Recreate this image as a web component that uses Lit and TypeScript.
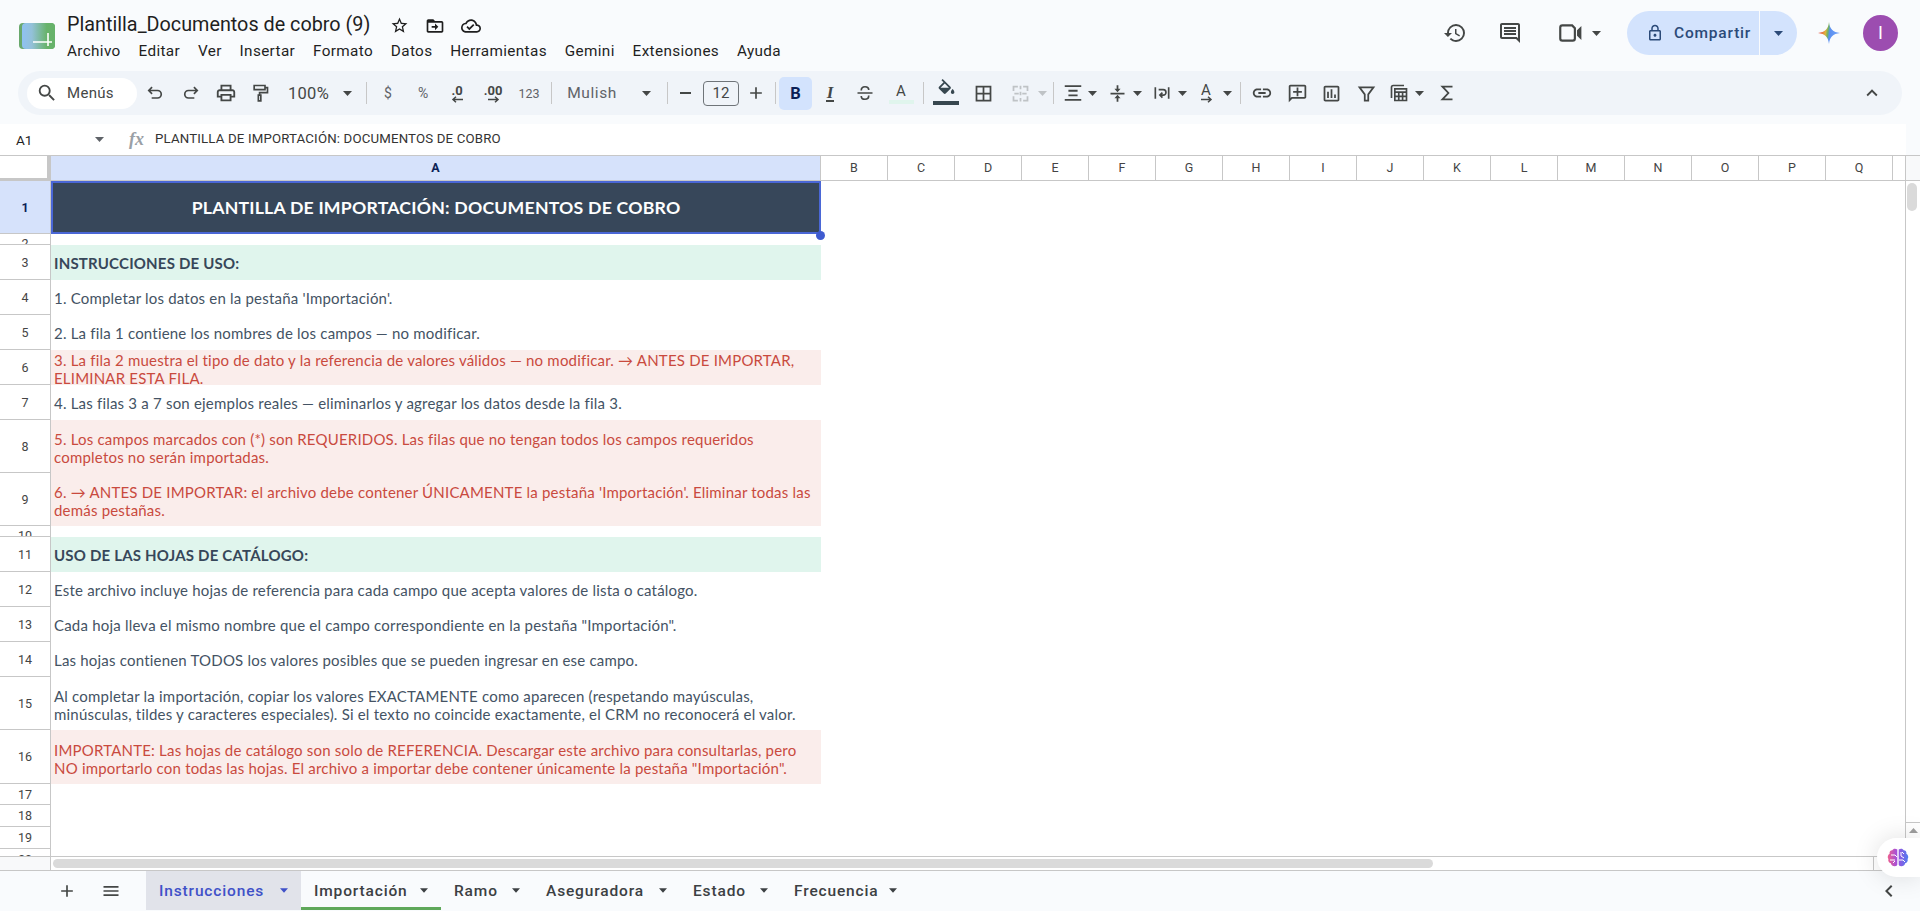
import { LitElement, html, css, svg, nothing } from "lit";
import { customElement } from "lit/decorators.js";

const P: Record<string, string> = {
  search: "M15.5 14h-.79l-.28-.27A6.471 6.471 0 0 0 16 9.5 6.5 6.5 0 1 0 9.5 16c1.61 0 3.09-.59 4.23-1.57l.27.28v.79l5 4.99L20.49 19l-4.99-5zm-6 0C7.01 14 5 11.99 5 9.5S7.01 5 9.5 5 14 7.01 14 9.5 11.99 14 9.5 14z",
  print: "M19 8h-1V3H6v5H5c-1.66 0-3 1.34-3 3v6h4v4h12v-4h4v-6c0-1.66-1.34-3-3-3zM8 5h8v3H8V5zm8 14H8v-4h8v4zm2-4v-2H6v2H4v-4c0-.55.45-1 1-1h14c.55 0 1 .45 1 1v4h-2z",
  star: "M22 9.24l-7.19-.62L12 2 9.19 8.63 2 9.24l5.46 4.73L5.82 21 12 17.27 18.18 21l-1.63-7.03L22 9.24zM12 15.4l-3.76 2.27 1-4.28-3.32-2.88 4.38-.38L12 6.1l1.71 4.04 4.38.38-3.32 2.88 1 4.28L12 15.4z",
  move: "M20 6h-8l-2-2H4c-1.1 0-2 .9-2 2v12c0 1.1.9 2 2 2h16c1.1 0 2-.9 2-2V8c0-1.1-.9-2-2-2zm0 12H4V8h16v10zm-8-4H8v-2h4V9l4 4-4 4v-3z",
  cloud: "M19.35 10.04C18.67 6.59 15.64 4 12 4 9.11 4 6.6 5.64 5.35 8.04 2.34 8.36 0 10.91 0 14c0 3.31 2.69 6 6 6h13c2.76 0 5-2.24 5-5 0-2.64-2.05-4.78-4.65-4.96zM19 18H6c-2.21 0-4-1.79-4-4 0-2.05 1.53-3.76 3.56-3.97l1.07-.11.5-.95C8.08 7.14 9.94 6 12 6c2.62 0 4.88 1.86 5.39 4.43l.3 1.5 1.53.11c1.56.1 2.78 1.41 2.78 2.96 0 1.65-1.35 3-3 3zm-9-3.82l-2.09-2.09L6.5 13.5 10 17l6.01-6.01-1.41-1.41z",
  history: "M13 3a9 9 0 0 0-9 9H1l3.89 3.89.07.14L9 12H6c0-3.87 3.13-7 7-7s7 3.13 7 7-3.13 7-7 7c-1.93 0-3.68-.79-4.94-2.06l-1.42 1.42A8.954 8.954 0 0 0 13 21a9 9 0 0 0 0-18zm-1 5v5l4.28 2.54.72-1.21-3.5-2.08V8H12z",
  comments: "M20 2H4c-1.1 0-2 .9-2 2v12c0 1.1.9 2 2 2h14l4 4V4c0-1.1-.9-2-2-2zm0 15.17L18.83 16H4V4h16v13.17zM6 12h12v2H6zm0-3h12v2H6zm0-3h12v2H6z",
  lock: "M18 8h-1V6c0-2.76-2.24-5-5-5S7 3.24 7 6v2H6c-1.1 0-2 .9-2 2v10c0 1.1.9 2 2 2h12c1.1 0 2-.9 2-2V10c0-1.1-.9-2-2-2zM9 6c0-1.66 1.34-3 3-3s3 1.34 3 3v2H9V6zm9 14H6V10h12v10zm-6-3c1.1 0 2-.9 2-2s-.9-2-2-2-2 .9-2 2 .9 2 2 2z",
  fill: "M16.56 8.94L7.62 0 6.21 1.41l2.38 2.38-5.15 5.15c-.59.59-.59 1.54 0 2.12l5.5 5.5c.29.29.68.44 1.06.44s.77-.15 1.06-.44l5.5-5.5c.59-.58.59-1.53 0-2.12zM5.21 10L10 5.21 14.79 10H5.21zM19 11.5s-2 2.17-2 3.5c0 1.1.9 2 2 2s2-.9 2-2c0-1.33-2-3.5-2-3.5z",
  borders: "M3 3v18h18V3H3zm8 16H5v-6h6v6zm0-8H5V5h6v6zm8 8h-6v-6h6v6zm0-8h-6V5h6v6z",
  link: "M3.9 12c0-1.71 1.39-3.1 3.1-3.1h4V7H7c-2.76 0-5 2.24-5 5s2.24 5 5 5h4v-1.9H7c-1.71 0-3.1-1.39-3.1-3.1zM8 13h8v-2H8v2zm9-6h-4v1.9h4c1.71 0 3.1 1.39 3.1 3.1s-1.39 3.1-3.1 3.1h-4V17h4c2.76 0 5-2.24 5-5s-2.24-5-5-5z",
  addc: "M20 2H4c-1.1 0-2 .9-2 2v18l4-4h14c1.1 0 2-.9 2-2V4c0-1.1-.9-2-2-2zm0 14H5.17L4 17.17V4h16v12zM13 5h-2v4H7v2h4v4h2v-4h4V9h-4V5z",
  chart: "M19 3H5c-1.1 0-2 .9-2 2v14c0 1.1.9 2 2 2h14c1.1 0 2-.9 2-2V5c0-1.1-.9-2-2-2zm0 16H5V5h14v14zM7 10h2v7H7zm4-3h2v10h-2zm4 6h2v4h-2z",
  up: "M7.41 15.41L12 10.83l4.59 4.58L18 14l-6-6-6 6z",
  left: "M15.41 7.41L14 6l-6 6 6 6 1.41-1.41L10.83 12z",
  menu: "M3 18h18v-2H3v2zm0-5h18v-2H3v2zm0-7v2h18V6H3z",
  plus: "M19 13h-6v6h-2v-6H5v-2h6V5h2v6h6v2z",
};
const S: Record<string, string> = {
  undo: "M8.5 5 4.5 9l4 4M4.5 9H15a4.5 4.5 0 0 1 0 9H8",
  redo: "M15.5 5l4 4-4 4M19.500 9H9a4.5 4.5 0 0 0 0 9h7",
  paint: "M5 3h13v5H5zM18 5.5h3v6h-9.5v3M10 14.5h3v7h-3z",
  strike: "M3 12h18M7.5 9C7.5 6 9.5 4.5 12 4.5S16.5 6 16.5 8.5M7.5 15.5C7.5 18 9.5 19.5 12 19.5s4.5-1.5 4.5-4.5",
  merge: "M4 9V4h5M15 4h5v5M4 15v5h5M15 20h5v-5M12 3v4M12 10v4M12 17v4M5 12h5M14 12h5",
  halign: "M3 4.5h18M7 9.5h10M7 14.5h10M3 19.5h18",
  valign: "M4 12h16M12 2.5V7M12 21.5V17",
  wrap: "M4 5v14M20 5v14M8 8h5.5a3 3 0 0 1 0 6.5H10M12.5 11.5 9.5 14.5l3 3",
  filter: "M4 5h16l-6 8v7h-4v-7z",
  calc: "M3 18V5a2 2 0 0 1 2-2h13M7 7h14v14H7zM7 11h14M7 16h14M11.7 11v10M16.3 11v10",
  sigma: "M18 5H7l6.500 7L7 19h11",
  video: "M3 7a2 2 0 0 1 2-2h9l2.500 2.500V17a2 2 0 0 1-2 2H5a2 2 0 0 1-2-2z",
};
const EXTRA: Record<string, string> = {
  valign: "M8.5 6.5h7L12 10.5zM8.5 17.5h7L12 13.5z",
  video: "M18.500 9.500l4-4v13l-4-4z",
};
const icon = (n: string, size = 24) =>
  html`<svg class="ic" width=${size} height=${size} viewBox="0 0 24 24">${
    S[n]
      ? svg`<path d=${S[n]} fill="none" stroke="currentColor" stroke-width="2"/>`
      : svg`<path d=${P[n]} fill="currentColor"/>`
  }${EXTRA[n] ? svg`<path d=${EXTRA[n]} fill="currentColor"/>` : nothing}</svg>`;
const caret = html`<svg class="caret" width="9" height="5" viewBox="0 0 9 5"><path d="M0 0h9L4.500 5z" fill="currentColor"/></svg>`;
const arrowR = html`<svg class="mini" width="13" height="7" viewBox="0 0 13 7"><path d="M1 3.500h10M8 .8 11 3.500 8 6.200" fill="none" stroke="currentColor" stroke-width="1.500"/></svg>`;
const arrowL = html`<svg class="mini" width="13" height="7" viewBox="0 0 13 7"><path d="M12 3.500H2M5 .8 2 3.500 5 6.200" fill="none" stroke="currentColor" stroke-width="1.500"/></svg>`;

type T = { c: number; t: any; cls?: string };
const tools: T[] = [
  { c: 155, t: icon("undo", 20) }, { c: 191, t: icon("redo", 20) }, { c: 226, t: icon("print", 22) }, { c: 260, t: icon("paint", 20) },
  { c: 308.5, t: "100%", cls: "zoomv" }, { c: 347, t: caret }, { c: 366.5, t: "", cls: "sep" },
  { c: 388, t: "$", cls: "fmt" }, { c: 423, t: "%", cls: "fmt" },
  { c: 457, t: html`<span class="dec"><b>.0</b>${arrowL}</span>` }, { c: 493, t: html`<span class="dec"><b>.00</b>${arrowR}</span>` },
  { c: 529, t: "123", cls: "n123" }, { c: 551, t: "", cls: "sep" },
  { c: 592, t: "Mulish", cls: "font" }, { c: 646, t: caret }, { c: 667, t: "", cls: "sep" },
  { c: 685, t: html`<span class="minus"></span>` }, { c: 721, t: html`<span class="size">12</span>` }, { c: 755.5, t: icon("plus", 20) }, { c: 775, t: "", cls: "sep" },
  { c: 795.5, t: html`<span class="bold">B</span>` }, { c: 830, t: html`<span class="ital">I</span>` }, { c: 865, t: icon("strike", 20) },
  { c: 901, t: html`<span class="colora">A</span>` }, { c: 923, t: "", cls: "sep" },
  { c: 946, t: html`<span class="fillw">${icon("fill", 21)}</span>` }, { c: 983, t: icon("borders", 21) },
  { c: 1020, t: icon("merge", 21), cls: "off" }, { c: 1042, t: caret, cls: "off" }, { c: 1053.5, t: "", cls: "sep" },
  { c: 1073, t: icon("halign", 22) }, { c: 1092, t: caret }, { c: 1117, t: icon("valign", 21) }, { c: 1137, t: caret },
  { c: 1162, t: icon("wrap", 20) }, { c: 1182, t: caret },
  { c: 1206, t: html`<span class="dec rot"><i>A</i>${arrowR}</span>` }, { c: 1227, t: caret }, { c: 1240, t: "", cls: "sep" },
  { c: 1262, t: icon("link", 22) }, { c: 1297, t: icon("addc", 21) }, { c: 1331, t: icon("chart", 21) },
  { c: 1366.5, t: icon("filter", 21) }, { c: 1399, t: icon("calc", 20) }, { c: 1419, t: caret }, { c: 1447, t: icon("sigma", 22) },
];

const menus = ["Archivo", "Editar", "Ver", "Insertar", "Formato", "Datos", "Herramientas", "Gemini", "Extensiones", "Ayuda"];
const cols = ["B", "C", "D", "E", "F", "G", "H", "I", "J", "K", "L", "M", "N", "O", "P", "Q"];
const tabs = [
  { t: "Instrucciones", w: 155, k: "active" }, { t: "Importación", w: 140, k: "green" }, { t: "Ramo", w: 92, k: "" },
  { t: "Aseguradora", w: 147, k: "" }, { t: "Estado", w: 101, k: "" }, { t: "Frecuencia", w: 129, k: "" },
];
type R = { n: number; h: number; k?: string; l?: string[] };
const rows: R[] = [
  { n: 1, h: 53, k: "hdr", l: ["PLANTILLA DE IMPORTACIÓN: DOCUMENTOS DE COBRO"] },
  { n: 2, h: 11 },
  { n: 3, h: 35, k: "sec", l: ["INSTRUCCIONES DE USO:"] },
  { n: 4, h: 35, l: ["1. Completar los datos en la pestaña 'Importación'."] },
  { n: 5, h: 35, l: ["2. La fila 1 contiene los nombres de los campos — no modificar."] },
  { n: 6, h: 35, k: "red", l: ["3. La fila 2 muestra el tipo de dato y la referencia de valores válidos — no modificar. → ANTES DE IMPORTAR,", "ELIMINAR ESTA FILA."] },
  { n: 7, h: 35, l: ["4. Las filas 3 a 7 son ejemplos reales — eliminarlos y agregar los datos desde la fila 3."] },
  { n: 8, h: 53, k: "red", l: ["5. Los campos marcados con (*) son REQUERIDOS. Las filas que no tengan todos los campos requeridos", "completos no serán importadas."] },
  { n: 9, h: 53, k: "red", l: ["6. → ANTES DE IMPORTAR: el archivo debe contener ÚNICAMENTE la pestaña 'Importación'. Eliminar todas las", "demás pestañas."] },
  { n: 10, h: 11 },
  { n: 11, h: 35, k: "sec", l: ["USO DE LAS HOJAS DE CATÁLOGO:"] },
  { n: 12, h: 35, l: ["Este archivo incluye hojas de referencia para cada campo que acepta valores de lista o catálogo."] },
  { n: 13, h: 35, l: ["Cada hoja lleva el mismo nombre que el campo correspondiente en la pestaña \"Importación\"."] },
  { n: 14, h: 35, l: ["Las hojas contienen TODOS los valores posibles que se pueden ingresar en ese campo."] },
  { n: 15, h: 53, l: ["Al completar la importación, copiar los valores EXACTAMENTE como aparecen (respetando mayúsculas,", "minúsculas, tildes y caracteres especiales). Si el texto no coincide exactamente, el CRM no reconocerá el valor."] },
  { n: 16, h: 54, k: "red", l: ["IMPORTANTE: Las hojas de catálogo son solo de REFERENCIA. Descargar este archivo para consultarlas, pero", "NO importarlo con todas las hojas. El archivo a importar debe contener únicamente la pestaña \"Importación\"."] },
  { n: 17, h: 21 }, { n: 18, h: 22 }, { n: 19, h: 22 }, { n: 20, h: 22 },
];

@customElement("app-root")
export class AppRoot extends LitElement {
  static styles = css`
    :host { display: block; position: relative; width: 1920px; height: 911px; overflow: hidden; background: #f9fbfd; font-family: Roboto, sans-serif; color: #1f1f1f; }
    .ic, .caret { display: block; flex: none; }
    .top { display: flex; height: 71px; color: #444746; }
    .logo { margin: 23px 0 0 19px; flex: none; }
    .titles { margin-left: 12px; }
    .title { display: flex; align-items: center; height: 24px; margin-top: 12px; font-size: 19.8px; color: #1f1f1f; white-space: nowrap; }
    .title .ic:first-of-type { margin-left: 20px; }
    .title .ic { margin: 3px 16px 0 0; }
    .menus { display: flex; gap: 17.9px; margin-top: 4px; font-size: 15.3px; line-height: 22px; color: #1f1f1f; letter-spacing: .35px; }
    .right { margin-left: auto; padding: 11px 22px 0 0; display: flex; align-items: flex-start; }
    .right > span { margin-top: 10px; }
    .hist { margin-right: 31px; }
    .cmt { margin-right: 35px; }
    .right > .vid { margin: 9px 9px 0 0; }
    .right > .caret { margin: 20px 26px 0 0; }
    .share { display: flex; height: 44px; width: 170px; border-radius: 22px; background: #d3e3fd; color: #2b4a78; overflow: hidden; }
    .share .a { width: 133px; display: flex; align-items: center; padding-left: 19px; gap: 10px; box-sizing: border-box; border-right: 1px solid #f9fbfd; font-size: 15.5px; letter-spacing: .8px; font-weight: 500; }
    .share .b { flex: 1; display: flex; align-items: center; justify-content: center; }
    .gem { margin: 10px 22px 0 20px; flex: none; }
    .avatar { width: 35px; height: 36px; margin-top: 4px; border-radius: 50%; background: #9c4db0; color: #fff; text-align: center; font-size: 18px; line-height: 36px; flex: none; }

    .toolbar { display: flex; align-items: center; height: 44px; margin: 0 18px; border-radius: 22px; background: #f0f4f9; color: #444746; padding-left: 9px; }
    .pill { display: flex; align-items: center; width: 110px; height: 31px; flex: none; border-radius: 16px; background: #fff; box-sizing: border-box; padding-left: 9px; gap: 9px; font-size: 15px; letter-spacing: .3px; color: #444746; }
    .t { display: flex; align-items: center; justify-content: center; flex: none; width: 2px; height: 44px; font-size: 15px; white-space: nowrap; }
    .t.sep::after { content: ""; flex: none; width: 1px; height: 22px; background: #c7c7c7; }
    .t.off { color: #bfc3c6; }
    .t.zoomv { font-size: 16.5px; letter-spacing: .3px; }
    .t.fmt { font-size: 14px; color: #5f6368; }
    .t.n123 { font-size: 12.5px; color: #5f6368; }
    .t.font { font-size: 15.5px; letter-spacing: .6px; color: #5f6368; }
    .dec { display: flex; flex: none; flex-direction: column; align-items: center; font-size: 13px; line-height: 13px; }
    .dec b { font-weight: 700; }
    .dec .mini { margin-top: -1px; }
    .rot i { font-style: normal; font-size: 15px; line-height: 14px; }
    .minus { flex: none; width: 11px; height: 2px; background: #444746; }
    .size { display: block; flex: none; width: 36px; height: 25px; box-sizing: border-box; border: 1px solid #6f7479; border-radius: 4px; text-align: center; line-height: 23px; font-size: 15px; }
    .bold { display: block; flex: none; width: 33px; height: 33px; line-height: 33px; text-align: center; border-radius: 5px; background: #d3e3fd; color: #0b1f56; font-weight: 700; font-size: 16.500px; }
    .ital { font-style: italic; font-weight: 700; font-size: 17px; font-family: "Liberation Serif", serif; border-bottom: 2px solid #444746; line-height: 15px; padding: 0 1px; }
    .colora { display: block; flex: none; width: 25px; text-align: center; font-size: 15px; line-height: 18px; border-bottom: 4px solid #e0f5ed; }
    .fillw { display: block; flex: none; width: 26px; border-bottom: 4px solid #37474f; color: #37474f; padding-bottom: 1px; }
    .fillw .ic { margin: -3px auto 0; }
    .collapse { margin-left: auto; margin-right: 19px; }

    .fbar { height: 31px; margin: 9px 14px 0 0; background: #fff; display: flex; align-items: center; font-size: 13px; }
    .fbar .ref { margin-left: 16px; width: 79px; font-size: 13.500px; }
    .fbar .caret { color: #5f6368; }
    .fbar .fx { margin-left: 25px; width: 26px; font: italic 700 18px "Liberation Serif", serif; color: #9aa0a6; }
    .fbar .val { font-size: 13.250px; letter-spacing: .16px; color: #333; white-space: nowrap; margin-top: -2px; }

    .sheet { height: 716px; background: #fff; display: flex; flex-direction: column; }
    .colhead { display: flex; height: 26px; box-sizing: border-box; border-top: 1px solid #c7c7c7; border-bottom: 1px solid #c7c7c7; flex: none; font-size: 12.500px; color: #444; background: #fff; }
    .corner { width: 51px; box-sizing: border-box; border-right: 4px solid #c7c7c7; border-bottom: 3px solid #c7c7c7; margin-bottom: -1px; flex: none; }
    .ch { width: 67px; flex: none; box-sizing: border-box; border-right: 1px solid #c7c7c7; text-align: center; line-height: 24px; }
    .ch.a { width: 770px; background: #d6e2fb; color: #0b1f56; font-weight: 700; }
    .ch.last { width: 13px; }
    .ch.sb { flex: 1; border: 0; background: #f8f9fa; }
    .body { flex: 1; min-height: 0; display: flex; overflow: hidden; }
    .grid { flex: 1; min-width: 0; overflow: hidden; }
    .row { display: flex; overflow: hidden; }
    .rh { width: 51px; flex: none; box-sizing: border-box; border-right: 1px solid #c7c7c7; border-bottom: 1px solid #c7c7c7; text-align: center; font-size: 12.500px; color: #444; overflow: hidden; }
    .rh.on { background: #d6e2fb; color: #0b1f56; font-weight: 700; }
    .cell { position: relative; width: 770px; flex: none; box-sizing: border-box; padding-left: 3px; display: flex; flex-direction: column; justify-content: center; font-family: Lato, sans-serif; font-size: 15px; line-height: 18px; letter-spacing: .2px; color: #445364; white-space: nowrap; overflow: hidden; }
    .cell.two { padding-top: 3px; }
    .cell.red { background: #faedeb; color: #c94a3e; }
    .cell.sec { background: #e0f5ed; font-weight: 700; color: #37475a; }
    .cell.hdr { background: #37475a; color: #fdfefe; font-weight: 700; font-size: 17.7px; text-align: center; padding-left: 0; box-shadow: inset 0 0 0 2px #4a67d6; }
    .vs { width: 14px; flex: none; border-left: 1px solid #c7c7c7; background: #fff; display: flex; flex-direction: column; }
    .vs .th { width: 10px; height: 28px; margin: 2px 0 0 1px; border-radius: 5px; background: #dadada; }
    .vs .up { margin-top: auto; height: 34px; border-top: 1px solid #c7c7c7; color: #9e9e9e; display: flex; justify-content: center; padding-top: 5px; box-sizing: border-box; }
    .up svg { transform: rotate(180deg); }
    .hs { height: 15px; flex: none; box-sizing: border-box; border-top: 1px solid #c7c7c7; border-bottom: 1px solid #c7c7c7; display: flex; }
    .hs .l { width: 51px; box-sizing: border-box; border-right: 1px solid #c7c7c7; background: #f8f9fa; }
    .hs .th { width: 1380px; height: 9px; margin: 2px 0 0 2px; border-radius: 5px; background: #dadada; }
    .hs .end { margin-left: auto; width: 46px; border-left: 1px solid #c7c7c7; }

    .tabs { height: 39px; display: flex; padding-left: 45px; color: #444746; }
    .tb { width: 44px; display: flex; align-items: center; justify-content: center; flex: none; }
    .tb + .tab { margin-left: 13px; }
    .tab { display: flex; align-items: center; box-sizing: border-box; flex: none; padding: 3px 13px 0; font-size: 15.5px; font-weight: 500; letter-spacing: .85px; color: #3c4043; border-bottom: 3px solid transparent; }
    .tab .caret { margin-left: auto; width: 8px; }
    .tab.active { background: #e1e3ea; color: #3f51c8; }
    .tab.green { border-bottom-color: #5fa85a; }
    .end-chev { margin-left: auto; margin-right: 19px; align-self: center; }
    .handle { position: absolute; left: 816px; top: 231px; width: 9px; height: 9px; border-radius: 50%; background: #3f5bd0; }
    .fab { position: absolute; right: 0; top: 838px; width: 43px; height: 39px; border-radius: 20px 0 0 20px; background: #fff; box-shadow: 0 0 26px rgba(0, 0, 0, .13); display: flex; align-items: center; padding-left: 10px; box-sizing: border-box; }
  `;

  private toolItems() {
    let prev = 137;
    return tools.map((it) => {
      const m = it.c - 1 - prev;
      prev = it.c + 1;
      return html`<div class="t ${it.cls ?? ""}" style="margin-left:${m}px">${it.t}</div>`;
    });
  }

  render() {
    return html`
      <div class="top">
        <svg class="logo" width="36" height="26" viewBox="0 0 36 26">
          <defs><linearGradient id="lg" x1="0" x2="1" y1="0" y2="0"><stop offset="0" stop-color="#8fc1f2"/><stop offset=".3" stop-color="#93c1d8"/><stop offset=".75" stop-color="#68b36b"/><stop offset="1" stop-color="#66b26a"/></linearGradient></defs>
          <rect width="36" height="26" rx="4" fill="#69a86c"/><rect x="3" width="33" height="26" rx="4" fill="url(#lg)"/>
          <path d="M14 19h19M29 10v13" stroke="#fff" stroke-width="1.600" fill="none"/>
        </svg>
        <div class="titles">
          <div class="title">Plantilla_Documentos de cobro (9)${icon("star", 19)}${icon("move", 20)}${icon("cloud", 20)}</div>
          <div class="menus">${menus.map((m) => html`<span>${m}</span>`)}</div>
        </div>
        <div class="right">
          <span class="hist">${icon("history", 24)}</span>
          <span class="cmt">${icon("comments", 24)}</span>
          <span class="vid">${icon("video", 26)}</span>
          ${caret}
          <div class="share"><div class="a">${icon("lock", 18)}<span>Compartir</span></div><div class="b">${caret}</div></div>
          <svg class="gem" width="24" height="24" viewBox="0 0 24 24"><defs><linearGradient id="gm" x1=".15" x2=".85" y1=".3" y2=".4"><stop offset="0" stop-color="#e8563f"/><stop offset=".3" stop-color="#dfb53e"/><stop offset=".45" stop-color="#6fb166"/><stop offset=".56" stop-color="#5b8ff0"/><stop offset="1" stop-color="#6a9df5"/></linearGradient></defs><path d="M12 1C12.600 7.500 16 11.400 23 12 16 12.600 12.600 16.500 12 23 11.400 16.500 8 12.600 1 12 8 11.400 11.400 7.500 12 1Z" fill="url(#gm)"/></svg>
          <div class="avatar">I</div>
        </div>
      </div>
      <div class="toolbar">
        <div class="pill">${icon("search", 22)}<span>Menús</span></div>
        ${this.toolItems()}
        <span class="collapse">${icon("up", 22)}</span>
      </div>
      <div class="fbar">
        <span class="ref">A1</span>${caret}
        <span class="fx">fx</span>
        <span class="val">PLANTILLA DE IMPORTACIÓN: DOCUMENTOS DE COBRO</span>
      </div>
      <div class="sheet">
        <div class="colhead">
          <div class="corner"></div>
          <div class="ch a">A</div>
          ${cols.map((c) => html`<div class="ch">${c}</div>`)}
          <div class="ch last"></div>
          <div class="ch sb"></div>
        </div>
        <div class="body">
          <div class="grid">
            ${rows.map((r) => html`
              <div class="row" style="height:${r.h}px">
                <div class="rh ${r.n === 1 ? "on" : ""}" style="line-height:${r.h < 15 ? 19 : r.h}px">${r.n}</div>
                ${r.l ? html`<div class="cell ${r.k ?? ""} ${r.l.length > 1 ? "two" : ""}">${r.l.map((t) => html`<div>${t}</div>`)}</div>` : nothing}
              </div>`)}
          </div>
          <div class="vs"><div class="th"></div><div class="up"><svg width="9" height="5" viewBox="0 0 9 5"><path d="M0 0h9L4.500 5z" fill="currentColor"/></svg></div></div>
        </div>
        <div class="hs"><div class="l"></div><div class="th"></div><div class="end"></div></div>
      </div>
      <div class="tabs">
        <div class="tb">${icon("plus", 20)}</div>
        <div class="tb">${icon("menu", 20)}</div>
        ${tabs.map((t) => html`<div class="tab ${t.k}" style="width:${t.w}px">${t.t}${caret}</div>`)}
        <span class="end-chev">${icon("left", 24)}</span>
      </div>
      <div class="handle"></div>
      <div class="fab">
        <svg width="22" height="20" viewBox="0 0 22 20"><defs><linearGradient id="br" x1="0" x2="1" y1="0" y2="0"><stop offset="0" stop-color="#ee5f8e"/><stop offset=".45" stop-color="#a24fdc"/><stop offset="1" stop-color="#4f7df0"/></linearGradient></defs>
          <path d="M10.300 1.500C8.500.200 6 .500 5.300 2.300 3.300 2.300 2.200 4 2.600 5.800 .700 6.800.200 9.500 1.400 11c-.6 2 .6 4 2.400 4.300.4 2.200 3 3.500 4.800 2.800.8-.2 1.700-.7 1.700-1.600zM11.700 1.500C13.500.200 16 .500 16.700 2.300c2 0 3.100 1.700 2.700 3.500 1.900 1 2.400 3.700 1.200 5.200.6 2-.6 4-2.400 4.300-.4 2.200-3 3.500-4.800 2.800-.8-.2-1.700-.7-1.700-1.600z" fill="url(#br)"/>
          <path d="M4 7h4l2 2M3 12h5M6 15l2-2M14 4v4l3 2M12 12h4l2 2M15 4l2 2" stroke="#fff" stroke-width="1" fill="none"/>
        </svg>
      </div>
    `;
  }
}
